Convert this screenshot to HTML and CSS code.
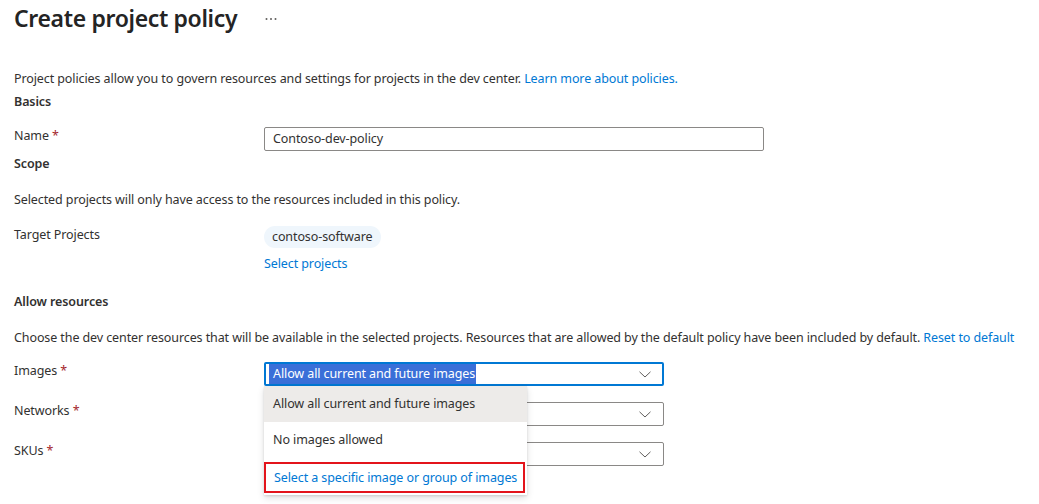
FILE: index.html
```html
<!DOCTYPE html>
<html lang="en">
<head>
  <meta charset="UTF-8">
  <title>Create project policy</title>
  <link rel="stylesheet" href="styles.css">
</head>
<body>
  <div class="page-header">
    <h1 class="title">Create project policy</h1>
    <span class="more" title="More">
      <svg width="12" height="4" viewBox="0 0 12 4"><circle cx="1.5" cy="2" r="1" fill="#605e5c"/><circle cx="6" cy="2" r="1" fill="#605e5c"/><circle cx="10.5" cy="2" r="1" fill="#605e5c"/></svg>
    </span>
  </div>

  <p class="intro">Project policies allow you to govern resources and settings for projects in the dev center. <a href="#" class="link">Learn more about policies.</a></p>

  <h2 class="section first">Basics</h2>
  <div class="field name-field">
    <label class="label">Name <span class="req">*</span></label>
    <div class="control">
      <div class="textbox">Contoso-dev-policy</div>
    </div>
  </div>

  <h2 class="section tight">Scope</h2>
  <p class="desc">Selected projects will only have access to the resources included in this policy.</p>
  <div class="field">
    <label class="label">Target Projects</label>
    <div class="control">
      <span class="pill">contoso-software</span>
      <a href="#" class="link select-link">Select projects</a>
    </div>
  </div>

  <h2 class="section allow">Allow resources</h2>
  <p class="desc">Choose the dev center resources that will be available in the selected projects. Resources that are allowed by the default policy have been included by default. <a href="#" class="link">Reset to default</a></p>

  <div class="dropdowns">
    <div class="field drop-field">
      <label class="label">Images <span class="req">*</span></label>
      <div class="control">
        <div class="dropdown focused">
          <span class="selected-text">Allow all current and future images</span>
          <svg class="chevron" width="12" height="7" viewBox="0 0 12 7"><path d="M0.5 0.8 L6 6 L11.5 0.8" fill="none" stroke="#605e5c" stroke-width="1"/></svg>
        </div>
        <ul class="menu">
          <li class="menu-item active">Allow all current and future images</li>
          <li class="menu-item">No images allowed</li>
          <li class="menu-item marked"><a href="#" class="link">Select a specific image or group of images</a></li>
        </ul>
      </div>
    </div>
    <div class="field drop-field">
      <label class="label">Networks <span class="req">*</span></label>
      <div class="control">
        <div class="dropdown">
          <span></span>
          <svg class="chevron" width="12" height="7" viewBox="0 0 12 7"><path d="M0.5 0.8 L6 6 L11.5 0.8" fill="none" stroke="#605e5c" stroke-width="1"/></svg>
        </div>
      </div>
    </div>
    <div class="field drop-field">
      <label class="label">SKUs <span class="req">*</span></label>
      <div class="control">
        <div class="dropdown">
          <span></span>
          <svg class="chevron" width="12" height="7" viewBox="0 0 12 7"><path d="M0.5 0.8 L6 6 L11.5 0.8" fill="none" stroke="#605e5c" stroke-width="1"/></svg>
        </div>
      </div>
    </div>
  </div>
</body>
</html>
```

FILE: styles.css
```css
* { box-sizing: border-box; }
body {
  margin: 0;
  padding: 0 14px 40px;
  background: #fff;
  color: #323130;
  font-family: "Noto Sans", "Open Sans", Arial, sans-serif;
  font-size: 12.5px;
  letter-spacing: -0.1px;
}
a { text-decoration: none; }
.link { color: #0078d4; }

.page-header {
  display: flex;
  align-items: center;
  height: 36px;
}
.title {
  margin: 0;
  font-size: 23px;
  font-weight: 600;
  letter-spacing: -0.35px;
  color: #242424;
  line-height: 36px;
}
.more {
  display: flex;
  margin-left: 28px;
  margin-top: 2px;
}

.intro {
  margin: 33px 0 0;
  line-height: 20px;
}
.section {
  margin: 0;
  font-size: 12.5px;
  font-weight: 600;
  line-height: 20px;
}
.section.first { margin-top: 3px; }
.section.tight { margin-top: 3px; }
.section.allow { margin-top: 18px; }
.desc {
  margin: 16px 0 0;
  line-height: 20px;
}

.field {
  display: flex;
  align-items: flex-start;
  margin-top: 16px;
}
.name-field { margin-top: 15px; }
.label {
  width: 250px;
  flex-shrink: 0;
  line-height: 18px;
}
.req { color: #a4262c; }
.control {
  display: flex;
  flex-direction: column;
  align-items: flex-start;
  position: relative;
}

.textbox {
  width: 500px;
  height: 24px;
  border: 1px solid #8a8886;
  border-radius: 2px;
  padding: 0 8px;
  line-height: 22px;
}

.pill {
  display: inline-block;
  background: #eff6fc;
  border-radius: 11px;
  height: 22px;
  line-height: 22px;
  padding: 0 8px;
}
.select-link {
  margin-top: 6px;
  line-height: 20px;
}

.dropdowns { margin-top: 14px; }
.dropdowns .field:first-child { margin-top: 0; }
.drop-field { margin-top: 16px; }
.dropdown {
  width: 400px;
  height: 24px;
  border: 1px solid #8a8886;
  border-radius: 2px;
  display: flex;
  align-items: center;
  justify-content: space-between;
  padding: 0 12px 0 8px;
}
.dropdown.focused {
  border: 2px solid #0078d4;
  padding: 0 11px 0 0;
}
.selected-text {
  background: #3a6fd8;
  color: #fff;
  line-height: 20px;
  padding: 0 1px 0 4px;
  border-left: 3px solid #fff;
}
.chevron { display: block; }

.menu {
  position: absolute;
  top: 24px;
  left: 0;
  width: 263px;
  margin: 0;
  padding: 0 0 1px;
  list-style: none;
  background: #fff;
  box-shadow: 0 3px 7px rgba(0, 0, 0, 0.13), 0 1px 2px rgba(0, 0, 0, 0.11);
  z-index: 10;
}
.menu-item {
  height: 36px;
  line-height: 36px;
  padding: 0 9px;
  white-space: nowrap;
}
.menu-item.active { background: #edebe9; }
.menu-item.marked {
  height: 31px;
  line-height: 27px;
  margin: 4px 2px 1px 0;
  padding: 0 8px;
  border: 2px solid #e3141b;
}
```
